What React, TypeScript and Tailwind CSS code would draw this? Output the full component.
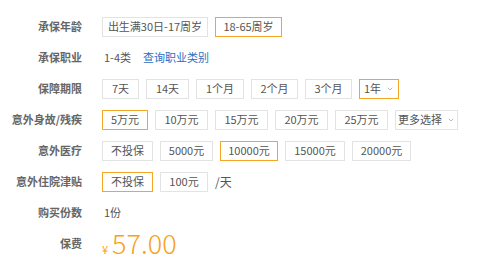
import { ChevronDown } from "lucide-react"

interface Opt {
  text: string
  w: number
  on?: boolean
  arrow?: boolean
}

function Btn({ text, w, on, arrow }: Opt) {
  return (
    <div
      className={`h-[20px] flex items-center justify-center whitespace-nowrap text-[11px] text-[#555] bg-white ${
        on ? "border border-[#f5a623]" : "border border-[#e3e3e3]"
      }`}
      style={{ width: w }}
    >
      <span>{text}</span>
      {arrow && <ChevronDown size={8} strokeWidth={2} className="ml-[5px] text-[#999]" />}
    </div>
  )
}

function Row({ label, children }: { label: string; children: React.ReactNode }) {
  return (
    <div className="flex items-center h-[31px]">
      <div className="w-[82px] text-right text-[11px] font-semibold text-[#666] whitespace-nowrap">{label}</div>
      <div className="ml-[20px] flex items-center gap-[7px]">{children}</div>
    </div>
  )
}

export default function App() {
  return (
    <div
      className="w-[493px] h-[271px] bg-white pt-[11px] overflow-hidden"
      style={{ fontFamily: '"Microsoft YaHei", "Noto Sans CJK SC", sans-serif' }}
    >
      <Row label="承保年龄">
        <Btn text="出生满30日-17周岁" w={106} />
        <Btn text="18-65周岁" w={67} on />
      </Row>
      <Row label="承保职业">
        <span className="text-[11px] text-[#555] ml-[2px]">1-4类</span>
        <span className="text-[11px] text-[#2d6bc4] ml-[5px]">查询职业类别</span>
      </Row>
      <Row label="保障期限">
        <Btn text="7天" w={37} />
        <Btn text="14天" w={43} />
        <Btn text="1个月" w={48} />
        <Btn text="2个月" w={47} />
        <Btn text="3个月" w={47} />
        <Btn text="1年" w={40} on arrow />
      </Row>
      <Row label="意外身故/残疾">
        <Btn text="5万元" w={46} on />
        <Btn text="10万元" w={53} />
        <Btn text="15万元" w={53} />
        <Btn text="20万元" w={53} />
        <Btn text="25万元" w={53} />
        <Btn text="更多选择" w={63} arrow />
      </Row>
      <Row label="意外医疗">
        <Btn text="不投保" w={51} />
        <Btn text="5000元" w={53} />
        <Btn text="10000元" w={58} on />
        <Btn text="15000元" w={60} />
        <Btn text="20000元" w={59} />
      </Row>
      <Row label="意外住院津贴">
        <Btn text="不投保" w={51} on />
        <Btn text="100元" w={48} />
        <span className="text-[12px] text-[#555]">/天</span>
      </Row>
      <Row label="购买份数">
        <span className="text-[11px] text-[#555] ml-[2px]">1份</span>
      </Row>
      <Row label="保费">
        <div className="flex items-baseline text-[#f7a21b]">
          <span className="text-[11px] mr-[4px]">¥</span>
          <span className="text-[27px] font-light leading-none">57.00</span>
        </div>
      </Row>
    </div>
  )
}
